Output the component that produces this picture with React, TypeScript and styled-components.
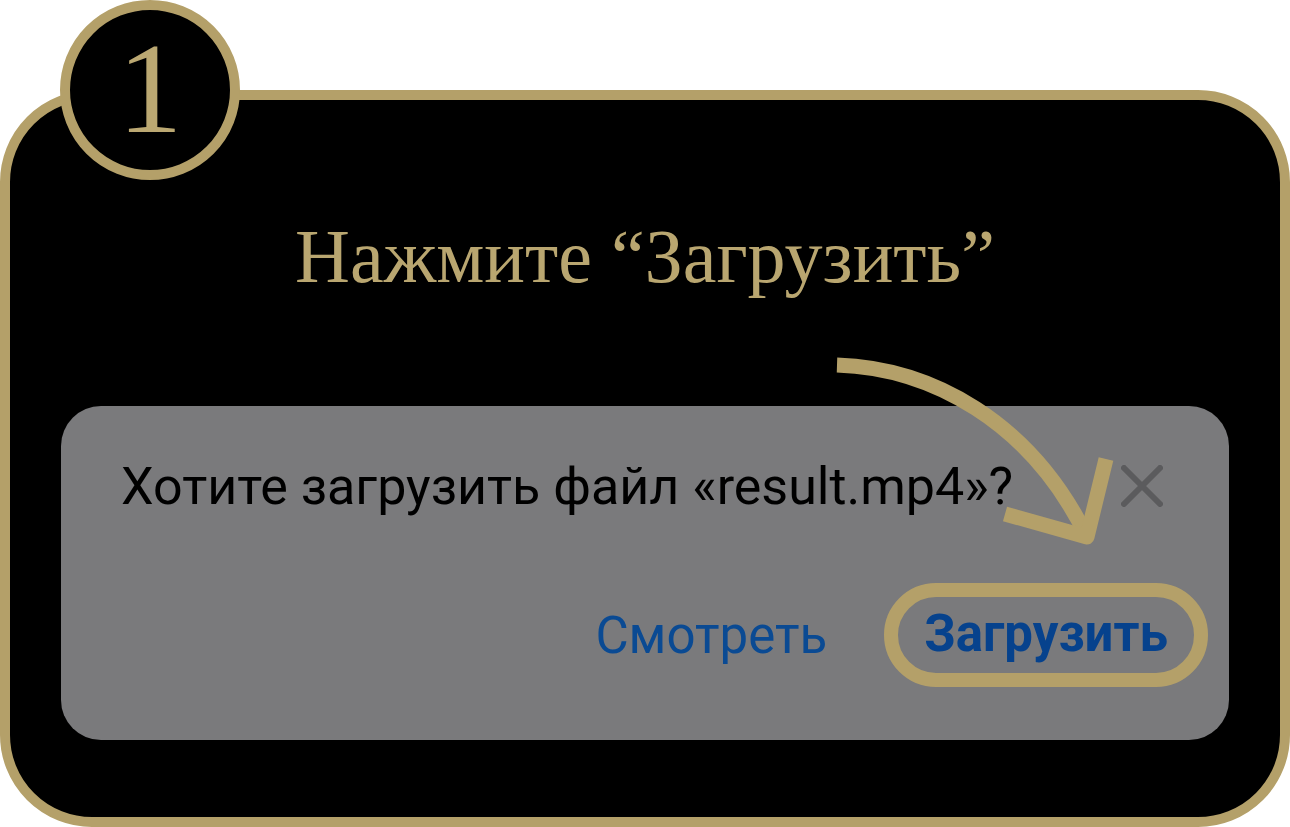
import React from "react";
import styled, { createGlobalStyle } from "styled-components";

const GOLD = "#b4a069";

const Global = createGlobalStyle`
  html, body { margin: 0; padding: 0; background: #ffffff; }
  body { font-family: "Roboto", "Liberation Sans", sans-serif; }
`;

const Stage = styled.div`
  position: relative;
  width: 1290px;
  height: 827px;
  overflow: hidden;
  background: #ffffff;
`;

const Card = styled.section`
  box-sizing: border-box;
  margin-top: 90px;
  height: 737px;
  width: 1290px;
  border: 10px solid ${GOLD};
  border-radius: 92px;
  background: #000000;
  display: flex;
  flex-direction: column;
  align-items: center;
`;

const Badge = styled.div`
  position: absolute;
  left: 60px;
  top: 0;
  box-sizing: border-box;
  width: 180px;
  height: 180px;
  border-radius: 50%;
  border: 10px solid ${GOLD};
  background: #000000;
  display: flex;
  align-items: center;
  justify-content: center;
  color: #bba872;
  font-family: "Liberation Serif", "DejaVu Serif", serif;
  font-size: 130px;
  line-height: 1;
  padding-bottom: 4px;
`;

const Title = styled.h1`
  margin: 118px 0 0;
  font-family: "Liberation Serif", "DejaVu Serif", serif;
  font-weight: 400;
  font-size: 76px;
  line-height: 1;
  color: #b9a670;
  letter-spacing: 0;
`;

const Panel = styled.div`
  box-sizing: border-box;
  margin-top: 112px;
  width: 1168px;
  height: 334px;
  border-radius: 40px;
  background: #7a7a7c;
  display: flex;
  flex-direction: column;
`;

const MessageRow = styled.div`
  margin-top: 40px;
  height: 80px;
  padding: 0 66px 0 60px;
  display: flex;
  align-items: center;
  justify-content: space-between;
`;

const Message = styled.p`
  margin: 0;
  font-family: "Roboto", "Liberation Sans", sans-serif;
  font-size: 52px;
  color: #000000;
`;

const CloseIcon = styled.svg`
  width: 42px;
  height: 42px;
  display: block;
`;

const Actions = styled.div`
  margin-top: 57px;
  padding-right: 21px;
  display: flex;
  align-items: center;
  justify-content: flex-end;
  gap: 57px;
`;

const ActionButton = styled.button<{ $primary?: boolean }>`
  box-sizing: border-box;
  background: transparent;
  font-family: "Roboto", "Liberation Sans", sans-serif;
  font-size: 51px;
  line-height: 1;
  color: ${(p) => (p.$primary ? "#06428d" : "#0a4a93")};
  font-weight: ${(p) => (p.$primary ? 700 : 400)};
  border: ${(p) => (p.$primary ? `14px solid ${GOLD}` : "none")};
  border-radius: 52px;
  height: ${(p) => (p.$primary ? "104px" : "auto")};
  padding: ${(p) => (p.$primary ? "0 26px 4px" : "0")};
  cursor: pointer;
`;

const ArrowOverlay = styled.svg`
  position: absolute;
  left: 0;
  top: 0;
  width: 1290px;
  height: 827px;
  pointer-events: none;
`;

export default function App() {
  return (
    <>
      <Global />
      <Stage>
        <Card>
          <Title>Нажмите “Загрузить”</Title>
          <Panel>
            <MessageRow>
              <Message>Хотите загрузить файл «result.mp4»?</Message>
              <CloseIcon viewBox="0 0 42 42">
                <path d="M3 3 L39 39 M39 3 L3 39" stroke="#5b5b5d" strokeWidth="6" strokeLinecap="round" />
              </CloseIcon>
            </MessageRow>
            <Actions>
              <ActionButton>Смотреть</ActionButton>
              <ActionButton $primary>Загрузить</ActionButton>
            </Actions>
          </Panel>
        </Card>
        <Badge>1</Badge>
        <ArrowOverlay viewBox="0 0 1290 827">
          <path d="M837 365 C930 368 1030 420 1087 537" fill="none" stroke={GOLD} strokeWidth="15" />
          <path d="M1106 459 L1087 537 L1005 514" fill="none" stroke={GOLD} strokeWidth="15" strokeLinejoin="round" />
        </ArrowOverlay>
      </Stage>
    </>
  );
}
